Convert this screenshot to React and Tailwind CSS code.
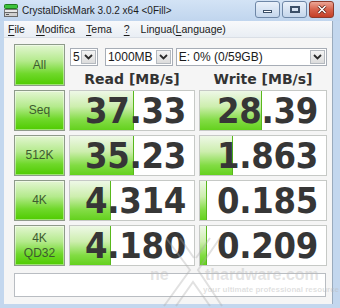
import React from 'react';

const rows = [
  { label: ['Seq'], read: '37.33', readBar: 64, write: '28.39', writeBar: 62 },
  { label: ['512K'], read: '35.23', readBar: 64, write: '1.863', writeBar: 33 },
  { label: ['4K'], read: '4.314', readBar: 41, write: '0.185', writeBar: 7 },
  { label: ['4K', 'QD32'], read: '4.180', readBar: 41, write: '0.209', writeBar: 7 },
];

const Chevron = () => (
  <svg width="9" height="6" viewBox="0 0 9 6">
    <path d="M1 1l3.5 3.5L8 1" fill="none" stroke="#2b2b2b" strokeWidth="1.8" />
  </svg>
);

const Select = ({ text, className }) => (
  <div className={`flex h-[18px] items-stretch border border-[#a7adb6] bg-white ${className}`}>
    <span className="flex flex-1 items-center pl-[2px] text-[12px] leading-none text-[#1a1a1a]">{text}</span>
    <div className="m-[1px] flex w-[15px] items-center justify-center border border-[#b4b9bf] bg-[linear-gradient(to_bottom,#f4f4f4,#dcdcdc)]">
      <Chevron />
    </div>
  </div>
);

const GreenButton = ({ lines }) => (
  <div className="flex flex-col items-center justify-center border border-[#8e9b8a] bg-[linear-gradient(to_bottom,#e3f6d2_0%,#b4ea8c_40%,#6fd82a_72%,#4fcb00_100%)] text-[12px] leading-[15px] text-[#3d5a30] shadow-[inset_0_0_0_1px_rgba(255,255,255,0.45)]">
    {lines.map((l) => (
      <span key={l}>{l}</span>
    ))}
  </div>
);

const ValueBox = ({ value, bar }) => (
  <div className="relative flex items-center justify-end overflow-hidden border border-[#c6c9c6] bg-white pr-[8px]">
    <div
      className="absolute bottom-0 left-0 top-0 border-r border-[#58b81c] bg-[linear-gradient(to_bottom,#eef8e7_0%,#cdeeae_40%,#82dc44_75%,#64d11e_100%)]"
      style={{ width: bar }}
    />
    <span className="relative text-[36px] font-bold leading-[28px] tracking-[-0.3px] text-[#363636] [font-family:'DejaVu_Sans_Condensed','DejaVu_Sans',sans-serif]">
      {value}
    </span>
  </div>
);

const Ul = ({ children }) => <span className="underline underline-offset-2">{children}</span>;

export default function App() {
  return (
    <div className="relative flex h-[308px] w-[340px] flex-col overflow-hidden bg-[#c3d7ee] [font-family:'Liberation_Sans',Arial,sans-serif]">
      {/* Title bar */}
      <div className="flex h-[21px] items-center bg-[linear-gradient(to_bottom,#d3e3f5,#c0d5ee)] pl-[4px] pr-[6px]">
        <svg width="14" height="13" viewBox="0 0 14 13" className="mr-[4px]">
          <rect x="0.5" y="0.5" width="13" height="4" rx="1" fill="#3cc23c" stroke="#1f7a1f" />
          <rect x="0.5" y="5.5" width="13" height="3" fill="#e8e8e8" stroke="#7a7a7a" />
          <rect x="0.5" y="8.5" width="13" height="4" fill="#d0d0d0" stroke="#6a6a6a" />
          <rect x="2" y="10" width="3" height="1" fill="#555" />
        </svg>
        <span className="text-[10px] leading-none text-[#1c1c1c]">CrystalDiskMark 3.0.2 x64 &lt;0Fill&gt;</span>
        <div className="ml-auto mt-[1px] flex h-[17px] items-stretch gap-[2px] self-start">
          <div className="flex w-[25px] items-end justify-center rounded-[3px] border border-[#6e87a7] bg-[linear-gradient(to_bottom,#eaf1fa,#c4d6ec)] pb-[4px]">
            <div className="h-[3px] w-[9px] border border-[#3b4f68] bg-white" />
          </div>
          <div className="flex w-[25px] items-center justify-center rounded-[3px] border border-[#6e87a7] bg-[linear-gradient(to_bottom,#eaf1fa,#c4d6ec)]">
            <div className="h-[7px] w-[10px] border-2 border-[#3b4f68] bg-transparent" />
          </div>
          <div className="flex w-[25px] items-center justify-center rounded-[3px] border border-[#8c3a2c] bg-[linear-gradient(to_bottom,#eca696,#d7634d_50%,#c43e26)]">
            <svg width="10" height="9" viewBox="0 0 10 9">
              <path d="M1.5 1l7 7M8.5 1l-7 7" stroke="#5a1d12" strokeWidth="3" />
              <path d="M1.5 1l7 7M8.5 1l-7 7" stroke="#ffffff" strokeWidth="1.6" />
            </svg>
          </div>
        </div>
      </div>

      {/* Client area */}
      <div className="mb-[4px] ml-[4px] mr-[7px] flex flex-1 flex-col border-r border-[#9aabbd] bg-[#f5f5f5]">
        {/* Menu */}
        <div className="flex h-[17px] items-center border-b border-[#dadfe6] bg-[linear-gradient(to_bottom,#f8f9fb,#e9eef4)] pl-[4px] text-[10.5px] leading-none text-[#1a1a1a]">
          <span><Ul>F</Ul>ile</span>
          <span className="ml-[11px]"><Ul>M</Ul>odifica</span>
          <span className="ml-[11px]"><Ul>T</Ul>ema</span>
          <span className="ml-[12px]"><Ul>?</Ul></span>
          <span className="ml-[11px]">Lingua(<Ul>L</Ul>anguage)</span>
        </div>

        {/* Main */}
        <div className="flex flex-col pl-[10px] pt-[6px]">
          <div className="grid grid-cols-[51px_126px_128px] grid-rows-[42px_41px_41px_41px_41px] gap-[4px]">
            <GreenButton lines={['All']} />
            <div className="col-span-2 flex flex-col">
              <div className="ml-[1px] mt-[4px] flex">
                <Select text="5" className="w-[28px]" />
                <Select text="1000MB" className="ml-[7px] w-[68px]" />
                <Select text="E: 0% (0/59GB)" className="ml-[3px] w-[152px]" />
              </div>
              <div className="mt-[5px] grid grid-cols-[126px_128px] gap-x-[4px] text-[14px] font-bold leading-[16px] text-[#333] [font-family:'DejaVu_Sans',sans-serif]">
                <span className="text-center">Read [MB/s]</span>
                <span className="text-center">Write [MB/s]</span>
              </div>
            </div>
            {rows.map((r) => (
              <React.Fragment key={r.label.join()}>
                <GreenButton lines={r.label} />
                <ValueBox value={r.read} bar={r.readBar} />
                <ValueBox value={r.write} bar={r.writeBar} />
              </React.Fragment>
            ))}
          </div>
          <div className="mt-[7px] h-[24px] w-[312px] border border-[#b9bdc2] bg-white" />
        </div>
      </div>

      {/* Watermark */}
      <div className="pointer-events-none absolute left-[150px] top-[232px] h-[76px] w-[190px]">
        <svg width="70" height="76" viewBox="0 0 70 76" className="absolute left-[8px] top-0">
          <path d="M8 6l24 32L6 74M22 6l14 20M52 6L38 26M62 6L40 38l24 36M18 74l17-24 17 24" fill="none" stroke="rgba(170,170,170,0.35)" strokeWidth="2" />
        </svg>
        <span className="absolute left-0 top-[35px] text-[16px] font-bold leading-[15px] text-[rgba(185,185,185,0.4)]">ne</span>
        <span className="absolute left-[55px] top-[35px] text-[16px] font-bold leading-[15px] text-[rgba(185,185,185,0.4)]">thardware.com</span>
        <span className="absolute left-[53px] top-[54px] whitespace-nowrap text-[8px] font-bold leading-[8px] text-[rgba(185,185,185,0.45)]">your ultimate professional resource</span>
      </div>
    </div>
  );
}
